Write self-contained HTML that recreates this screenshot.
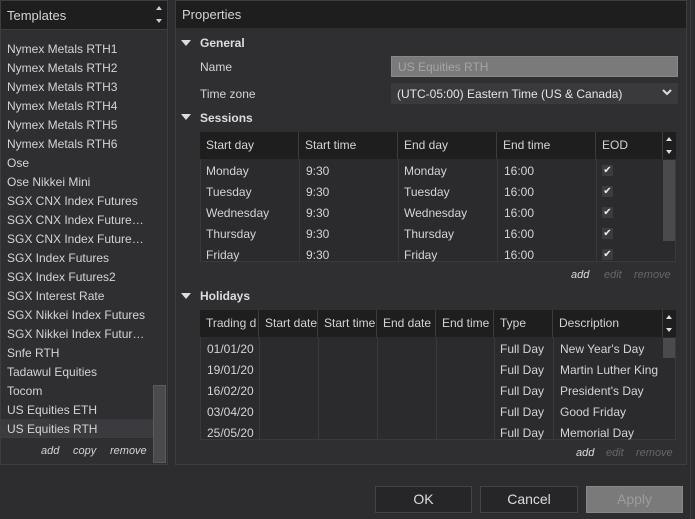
<!DOCTYPE html><html><head><style>
*{margin:0;padding:0;box-sizing:border-box}
body{width:695px;height:519px;background:#2d2d30;font-family:"Liberation Sans",sans-serif;font-size:12px;color:#d4d4d4;position:relative;overflow:hidden}
.a{position:absolute}
.hdr{background:#1e1e1e}
.t{position:absolute;white-space:nowrap}
.li{position:absolute;left:7px;white-space:nowrap;font-size:12px;margin-top:1px}
.tri{position:absolute;width:0;height:0;border-left:5px solid transparent;border-right:5px solid transparent;border-top:6px solid #ddd}
.sec{font-weight:bold;color:#ddd}
.th{position:absolute;top:0;height:27px;line-height:27px;padding-left:6px;border-right:1px solid #3c3c3c;overflow:hidden;white-space:nowrap}
.vl{position:absolute;width:1px;background:#3a3a3c}
.chk{position:absolute;width:11px;height:11px;background:#3c3c3e;color:#eee;font-size:10px;line-height:11px;text-align:center}
.btn{position:absolute;top:486px;height:27px;border:1px solid #444;background:#262628;text-align:center;line-height:25px;font-size:14px;color:#ddd}
.lk{position:absolute;font-style:italic;font-size:11px}
</style></head><body>
<div class="a" style="left:0;top:0;width:168px;height:465px;border:1px solid #3e3e40;background:#2f2f32"></div>
<div class="a hdr" style="left:1px;top:1px;width:152px;height:28px"></div>
<div class="t" style="left:7px;top:8px;font-size:13px">Templates</div>
<div class="a hdr" style="left:153px;top:1px;width:14px;height:28px"></div>
<div class="a" style="left:156px;top:6px;border-left:3px solid transparent;border-right:3px solid transparent;border-bottom:4px solid #ccc"></div>
<div class="a" style="left:156px;top:19px;border-left:3px solid transparent;border-right:3px solid transparent;border-top:4px solid #ccc"></div>
<div class="a" style="left:1px;top:29px;width:166px;height:1px;background:#3e3e40"></div>
<div class="a" style="left:1px;top:419px;width:152px;height:18px;background:#3b3b3f"></div>
<div class="a" style="left:153px;top:385px;width:13px;height:78px;background:#4a4a4c;border:1px solid #5a5a5c"></div>
<div class="a" style="left:1px;top:437px;width:152px;height:1px;background:#3e3e40"></div>
<div class="li" style="top:41px">Nymex Metals RTH1</div>
<div class="li" style="top:60px">Nymex Metals RTH2</div>
<div class="li" style="top:79px">Nymex Metals RTH3</div>
<div class="li" style="top:98px">Nymex Metals RTH4</div>
<div class="li" style="top:117px">Nymex Metals RTH5</div>
<div class="li" style="top:136px">Nymex Metals RTH6</div>
<div class="li" style="top:155px">Ose</div>
<div class="li" style="top:174px">Ose Nikkei Mini</div>
<div class="li" style="top:193px">SGX CNX Index Futures</div>
<div class="li" style="top:212px">SGX CNX Index Future…</div>
<div class="li" style="top:231px">SGX CNX Index Future…</div>
<div class="li" style="top:250px">SGX Index Futures</div>
<div class="li" style="top:269px">SGX Index Futures2</div>
<div class="li" style="top:288px">SGX Interest Rate</div>
<div class="li" style="top:307px">SGX Nikkei Index Futures</div>
<div class="li" style="top:326px">SGX Nikkei Index Futur…</div>
<div class="li" style="top:345px">Snfe RTH</div>
<div class="li" style="top:364px">Tadawul Equities</div>
<div class="li" style="top:383px">Tocom</div>
<div class="li" style="top:402px">US Equities ETH</div>
<div class="li" style="top:421px">US Equities RTH</div>
<div class="lk" style="left:41px;top:445px">add</div>
<div class="lk" style="left:73px;top:445px">copy</div>
<div class="lk" style="left:110px;top:445px">remove</div>

<div class="a" style="left:175px;top:0;width:512px;height:465px;border:1px solid #3e3e40;background:#2f2f32"></div>
<div class="a hdr" style="left:176px;top:1px;width:510px;height:27px"></div>
<div class="a" style="left:690px;top:0;width:1px;height:519px;background:#3e3e40"></div>
<div class="t" style="left:182px;top:7px;font-size:13px">Properties</div>
<div class="tri" style="left:181px;top:40px"></div><div class="t sec" style="left:200px;top:36px">General</div>
<div class="t" style="left:200px;top:60px">Name</div>
<div class="a" style="left:391px;top:56px;width:287px;height:21px;background:#7a7a7a;border:1px solid #888"></div>
<div class="t" style="left:398px;top:60px;color:#a5a5a5">US Equities RTH</div>
<div class="t" style="left:200px;top:87px">Time zone</div>
<div class="a" style="left:391px;top:83px;width:287px;height:21px;background:#3a3a3c"></div>
<div class="t" style="left:397px;top:87px;color:#e4e4e4">(UTC-05:00) Eastern Time (US &amp; Canada)</div>
<svg class="a" style="left:662px;top:88px" width="10" height="8"><path d="M1 2 L5 6 L9 2" stroke="#ddd" stroke-width="2" fill="none"/></svg>
<div class="tri" style="left:181px;top:114px"></div><div class="t sec" style="left:200px;top:111px">Sessions</div>

<div class="a" style="left:200px;top:132px;width:476px;height:130px;background:#2b2b2e;border:1px solid #3a3a3c"></div>
<div class="a hdr" style="left:200px;top:132px;width:476px;height:27px">
<div class="th" style="left:0;width:99px">Start day</div><div class="th" style="left:99px;width:99px">Start time</div><div class="th" style="left:198px;width:99px">End day</div><div class="th" style="left:297px;width:99px">End time</div><div class="th" style="left:396px;width:67px">EOD</div>
</div>
<div class="a" style="left:666px;top:137px;border-left:3px solid transparent;border-right:3px solid transparent;border-bottom:4px solid #ddd"></div>
<div class="a" style="left:666px;top:150px;border-left:3px solid transparent;border-right:3px solid transparent;border-top:4px solid #ddd"></div>
<div class="a" style="left:663px;top:160px;width:12px;height:81px;background:#4a4a4c"></div>
<div class="vl" style="left:299px;top:159px;height:103px"></div><div class="vl" style="left:398px;top:159px;height:103px"></div><div class="vl" style="left:497px;top:159px;height:103px"></div><div class="vl" style="left:596px;top:159px;height:103px"></div>
<div class="t" style="left:206px;top:164px">Monday</div><div class="t" style="left:306px;top:164px">9:30</div><div class="t" style="left:404px;top:164px">Monday</div><div class="t" style="left:504px;top:164px">16:00</div><div class="chk" style="left:602px;top:165px">✔</div>
<div class="t" style="left:206px;top:185px">Tuesday</div><div class="t" style="left:306px;top:185px">9:30</div><div class="t" style="left:404px;top:185px">Tuesday</div><div class="t" style="left:504px;top:185px">16:00</div><div class="chk" style="left:602px;top:186px">✔</div>
<div class="t" style="left:206px;top:206px">Wednesday</div><div class="t" style="left:306px;top:206px">9:30</div><div class="t" style="left:404px;top:206px">Wednesday</div><div class="t" style="left:504px;top:206px">16:00</div><div class="chk" style="left:602px;top:207px">✔</div>
<div class="t" style="left:206px;top:227px">Thursday</div><div class="t" style="left:306px;top:227px">9:30</div><div class="t" style="left:404px;top:227px">Thursday</div><div class="t" style="left:504px;top:227px">16:00</div><div class="chk" style="left:602px;top:228px">✔</div>
<div class="t" style="left:206px;top:248px">Friday</div><div class="t" style="left:306px;top:248px">9:30</div><div class="t" style="left:404px;top:248px">Friday</div><div class="t" style="left:504px;top:248px">16:00</div><div class="chk" style="left:602px;top:249px">✔</div>
<div class="lk" style="left:571px;top:269px;color:#ddd">add</div><div class="lk" style="left:604px;top:269px;color:#666">edit</div><div class="lk" style="left:634px;top:269px;color:#666">remove</div>

<div class="tri" style="left:181px;top:293px"></div><div class="t sec" style="left:200px;top:289px">Holidays</div>
<div class="a" style="left:200px;top:310px;width:476px;height:130px;background:#2b2b2e;border:1px solid #3a3a3c"></div>
<div class="a hdr" style="left:200px;top:310px;width:476px;height:27px">
<div class="th" style="left:0;width:59px">Trading d</div><div class="th" style="left:59px;width:59px">Start date</div><div class="th" style="left:118px;width:59px">Start time</div><div class="th" style="left:177px;width:59px">End date</div><div class="th" style="left:236px;width:58px">End time</div><div class="th" style="left:294px;width:59px">Type</div><div class="th" style="left:353px;width:110px">Description</div>
</div>
<div class="a" style="left:666px;top:315px;border-left:3px solid transparent;border-right:3px solid transparent;border-bottom:4px solid #ddd"></div>
<div class="a" style="left:666px;top:328px;border-left:3px solid transparent;border-right:3px solid transparent;border-top:4px solid #ddd"></div>
<div class="a" style="left:663px;top:338px;width:12px;height:20px;background:#4a4a4c"></div>
<div class="vl" style="left:259px;top:337px;height:103px"></div><div class="vl" style="left:318px;top:337px;height:103px"></div><div class="vl" style="left:377px;top:337px;height:103px"></div><div class="vl" style="left:436px;top:337px;height:103px"></div><div class="vl" style="left:494px;top:337px;height:103px"></div><div class="vl" style="left:553px;top:337px;height:103px"></div>
<div class="t" style="left:207px;top:342px">01/01/20</div><div class="t" style="left:500px;top:342px">Full Day</div><div class="t" style="left:560px;top:342px">New Year's Day</div>
<div class="t" style="left:207px;top:363px">19/01/20</div><div class="t" style="left:500px;top:363px">Full Day</div><div class="t" style="left:560px;top:363px">Martin Luther King</div>
<div class="t" style="left:207px;top:384px">16/02/20</div><div class="t" style="left:500px;top:384px">Full Day</div><div class="t" style="left:560px;top:384px">President's Day</div>
<div class="t" style="left:207px;top:405px">03/04/20</div><div class="t" style="left:500px;top:405px">Full Day</div><div class="t" style="left:560px;top:405px">Good Friday</div>
<div class="t" style="left:207px;top:426px">25/05/20</div><div class="t" style="left:500px;top:426px">Full Day</div><div class="t" style="left:560px;top:426px">Memorial Day</div>
<div class="lk" style="left:576px;top:447px;color:#ddd">add</div><div class="lk" style="left:606px;top:447px;color:#666">edit</div><div class="lk" style="left:636px;top:447px;color:#666">remove</div>

<div class="btn" style="left:375px;width:97px">OK</div>
<div class="btn" style="left:480px;width:98px">Cancel</div>
<div class="btn" style="left:586px;width:97px;background:#7a7a7a;border-color:#888;color:#9c9c9c">Apply</div>
</body></html>
